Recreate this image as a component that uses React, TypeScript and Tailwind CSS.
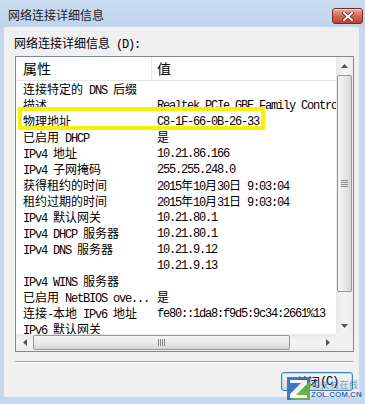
import React from 'react'

const CJK = /([\u2e80-\u9fff\uff00-\uffef]+)/

// splits mixed text so CJK runs get a 12px CJK face and latin runs a 6px-wide mono
function Txt({ text }: { text: string }) {
  const parts = text.split(CJK).filter((p) => p !== '')
  return (
    <>
      {parts.map((p, i) =>
        CJK.test(p) ? (
          <span key={i} className="font-['Noto_Sans_CJK_SC',sans-serif]">{p}</span>
        ) : (
          <span key={i} className="font-['Liberation_Mono',monospace] tracking-[-1.2px] whitespace-pre">{p}</span>
        )
      )}
    </>
  )
}

function Arrow({ dir }: { dir: 'up' | 'down' | 'left' | 'right' }) {
  const vert = dir === 'up' || dir === 'down'
  const d = {
    up: 'M3.5 0L7 4H0Z',
    down: 'M0 0H7L3.5 4Z',
    left: 'M0 3.5L4 0V7Z',
    right: 'M0 0L4 3.5L0 7Z',
  }[dir]
  return (
    <svg width={vert ? 7 : 4} height={vert ? 4 : 7} viewBox={vert ? '0 0 7 4' : '0 0 4 7'}>
      <path d={d} fill="#555" />
    </svg>
  )
}

const rows: [string, string][] = [
  ['连接特定的 DNS 后缀', ''],
  ['描述', 'Realtek PCIe GBE Family Controller'],
  ['物理地址', 'C8-1F-66-0B-26-33'],
  ['已启用 DHCP', '是'],
  ['IPv4 地址', '10.21.86.166'],
  ['IPv4 子网掩码', '255.255.248.0'],
  ['获得租约的时间', '2015年10月30日 9:03:04'],
  ['租约过期的时间', '2015年10月31日 9:03:04'],
  ['IPv4 默认网关', '10.21.80.1'],
  ['IPv4 DHCP 服务器', '10.21.80.1'],
  ['IPv4 DNS 服务器', '10.21.9.12'],
  ['', '10.21.9.13'],
  ['IPv4 WINS 服务器', ''],
  ['已启用 NetBIOS ove...', '是'],
  ['连接-本地 IPv6 地址', 'fe80::1da8:f9d5:9c34:2661%13'],
  ['IPv6 默认网关', ''],
]

export default function App() {
  return (
    <div className="relative w-[365px] h-[404px] overflow-hidden bg-[#c4d8ef] text-black">
      {/* Title bar */}
      <div className="flex items-start h-[27px] pl-[8px] bg-gradient-to-b from-[#c9dcf1] to-[#bfd4ec]">
        <div className="pt-[7px] text-[12px] leading-[16px] text-[#1a1a1a] font-['Noto_Sans_CJK_SC',sans-serif]">
          网络连接详细信息
        </div>
        <div className="ml-auto mr-[2px] mt-[8px] w-[31px] h-[16px] rounded-[3px] border border-[#7a2b22] bg-gradient-to-b from-[#ebb0a3] via-[#d56654] to-[#c0412f] flex items-center justify-center shadow-[inset_0_1px_0_#f4cfc6]">
          <svg width="12" height="9" viewBox="0 0 12 9">
            <path d="M2 1L10 8M10 1L2 8" stroke="#5a1d16" strokeWidth="3.4" strokeLinecap="square" />
            <path d="M2 1L10 8M10 1L2 8" stroke="#fff" strokeWidth="2" strokeLinecap="square" />
          </svg>
        </div>
      </div>

      {/* Client area */}
      <div className="ml-[4px] w-[355px] h-[370px] bg-[#f0f0f0] flex flex-col">
        <div className="ml-[10px] mt-[8px] text-[12px] leading-[16px]">
          <Txt text="网络连接详细信息 (D):" />
        </div>

        <div className="ml-[11px] mt-[3px] w-[339px] h-[296px] border border-[#828790] bg-white grid grid-cols-[320px_17px] grid-rows-[277px_17px]">
          {/* list */}
          <div className="overflow-hidden">
            <div className="flex h-[24px] border-b border-[#e5e5e5] text-[14px] leading-[23px] font-['Noto_Sans_CJK_SC',sans-serif]">
              <div className="w-[136px] pl-[7px] border-r border-[#e5e5e5]">属性</div>
              <div className="pl-[5px]">值</div>
            </div>
            {rows.map(([k, v], i) => (
              <div key={i} className="flex h-[16px] text-[12px] leading-[16px]">
                <div className="w-[136px] shrink-0 pl-[7px] overflow-hidden whitespace-nowrap">
                  <Txt text={k} />
                </div>
                <div className="flex-1 pl-[5px] overflow-hidden whitespace-nowrap">
                  <Txt text={v} />
                </div>
              </div>
            ))}
          </div>

          {/* vertical scrollbar */}
          <div className="flex flex-col bg-gradient-to-r from-[#e8e8e8] via-[#f4f4f4] to-[#ececec]">
            <div className="h-[17px] flex items-center justify-center">
              <Arrow dir="up" />
            </div>
            <div className="mt-[1px] mx-[1px] h-[217px] rounded-[2px] border border-[#979797] bg-gradient-to-r from-[#f4f4f4] via-[#e9e9e9] to-[#d6d6d6] flex items-center justify-center">
              <div className="flex flex-col gap-[1px]">
                <div className="w-[7px] h-[1px] bg-[#8a8a8a]" />
                <div className="w-[7px] h-[1px] bg-[#8a8a8a]" />
                <div className="w-[7px] h-[1px] bg-[#8a8a8a]" />
                <div className="w-[7px] h-[1px] bg-[#8a8a8a]" />
              </div>
            </div>
            <div className="flex-1" />
            <div className="h-[17px] flex items-center justify-center">
              <Arrow dir="down" />
            </div>
          </div>

          {/* horizontal scrollbar */}
          <div className="flex bg-gradient-to-b from-[#e8e8e8] via-[#f4f4f4] to-[#ececec]">
            <div className="w-[17px] flex items-center justify-center">
              <Arrow dir="left" />
            </div>
            <div className="my-[1px] w-[257px] rounded-[2px] border border-[#979797] bg-gradient-to-b from-[#f4f4f4] via-[#e9e9e9] to-[#d6d6d6] flex items-center justify-center">
              <div className="flex gap-[1px]">
                <div className="w-[1px] h-[7px] bg-[#8a8a8a]" />
                <div className="w-[1px] h-[7px] bg-[#8a8a8a]" />
                <div className="w-[1px] h-[7px] bg-[#8a8a8a]" />
                <div className="w-[1px] h-[7px] bg-[#8a8a8a]" />
              </div>
            </div>
            <div className="flex-1" />
            <div className="w-[17px] flex items-center justify-center">
              <Arrow dir="right" />
            </div>
          </div>
          <div className="bg-[#f0f0f0]" />
        </div>

        {/* etched separator */}
        <div className="ml-[11px] mt-[9px] w-[338px] h-[2px] border-t border-[#a0a0a0] border-b border-b-white" />

        <div className="flex mt-[9px]">
          <button className="ml-auto mr-[6px] w-[72px] h-[19px] rounded-[3px] border border-[#3c7fb1] shadow-[inset_0_0_0_1px_#a6e3fa] bg-gradient-to-b from-[#f6f6f6] via-[#e9e9e9] to-[#d6d6d6] text-[12px] leading-[16px] flex items-center justify-center">
            <Txt text="关闭(C)" />
          </button>
        </div>
      </div>

      {/* yellow annotation box */}
      <div className="absolute left-[18px] top-[107px] w-[247px] h-[23px] border-4 border-[#f7f300]" />

      {/* watermark */}
      <div className="absolute left-[287px] top-[377px] flex items-start gap-[1px] opacity-90">
        <svg width="23" height="23" viewBox="0 0 23 23">
          <path d="M0 0H23V23H0Z" fill="#2c6fbd" />
          <path d="M23 4V23H4Z" fill="#5fae2e" />
          <path d="M3 3H20V7L9 18H20V21H3V17L14 6H3Z" fill="#fff" />
        </svg>
        <div className="flex flex-col">
          <div className="text-[9px] leading-[11px] text-[#3b86d4]/80 font-['Noto_Sans_CJK_SC',sans-serif] tracking-[0.5px] mt-[2px]">中关村在线</div>
          <div className="text-[8px] leading-[9px] font-bold text-[#1e64b4] font-['Liberation_Sans',sans-serif]">ZOL.COM.CN</div>
        </div>
      </div>
    </div>
  )
}
